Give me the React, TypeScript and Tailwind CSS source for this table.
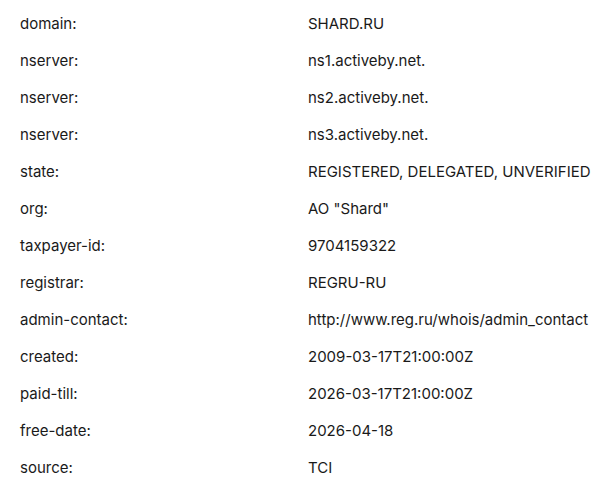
const rows: [string, string][] = [
  ['domain:', 'SHARD.RU'],
  ['nserver:', 'ns1.activeby.net.'],
  ['nserver:', 'ns2.activeby.net.'],
  ['nserver:', 'ns3.activeby.net.'],
  ['state:', 'REGISTERED, DELEGATED, UNVERIFIED'],
  ['org:', 'AO "Shard"'],
  ['taxpayer-id:', '9704159322'],
  ['registrar:', 'REGRU-RU'],
  ['admin-contact:', 'http://www.reg.ru/whois/admin_contact'],
  ['created:', '2009-03-17T21:00:00Z'],
  ['paid-till:', '2026-03-17T21:00:00Z'],
  ['free-date:', '2026-04-18'],
  ['source:', 'TCI'],
]

export default function App() {
  return (
    <div className="min-h-screen bg-white px-5 pt-[6px] text-[15px] text-[#1a1a1a] font-['Inter',sans-serif]">
      {rows.map(([k, v], i) => (
        <div key={i} className="grid grid-cols-[288px_1fr] h-[37px] items-center whitespace-nowrap">
          <span>{k}</span>
          <span>{v}</span>
        </div>
      ))}
    </div>
  )
}
